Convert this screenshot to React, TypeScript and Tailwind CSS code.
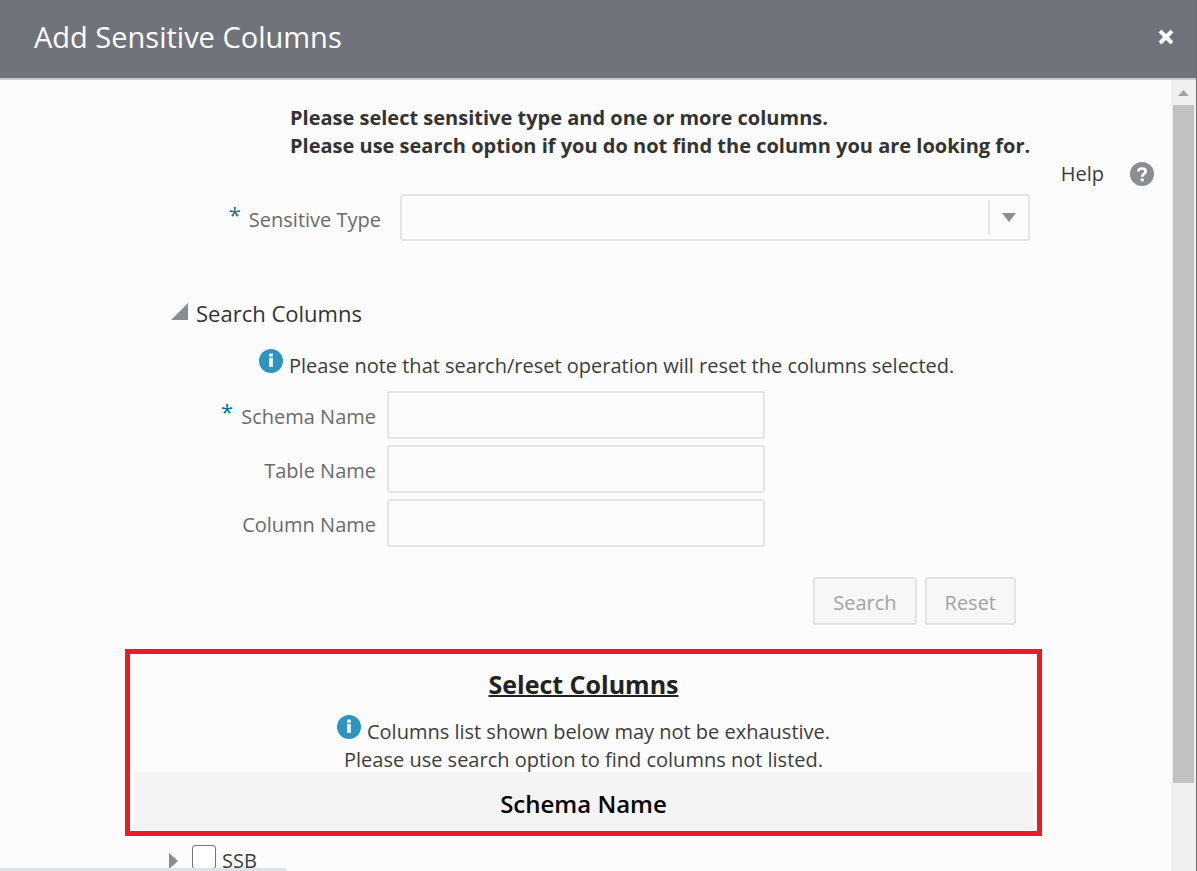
import React from "react";

function InfoIcon() {
  return (
    <svg className="h-6 w-6 shrink-0" viewBox="0 0 24 24" aria-hidden="true">
      <circle cx="12" cy="12" r="12" fill="#2c94bf" />
      <rect x="10.2" y="4.6" width="3.6" height="3" fill="#fff" />
      <rect x="10.2" y="8.8" width="3.6" height="9.2" fill="#fff" />
    </svg>
  );
}

function Required() {
  return <span className="mr-2 self-start pt-1.5 text-[22px] text-[#0572a8]">*</span>;
}

function SearchField({ id, label, required }: { id: string; label: string; required?: boolean }) {
  return (
    <div className="flex items-center gap-[11px]">
      <label htmlFor={id} className="flex h-12 w-[251px] shrink-0 justify-end text-[#6b6b6b]">
        {required && <Required />}
        <span className="self-center pt-1">{label}</span>
      </label>
      <input
        id={id}
        type="text"
        className="h-12 w-[378px] rounded-[3px] border-2 border-[#e4e5e6] bg-[#fcfcfc] px-3 outline-none"
      />
    </div>
  );
}

const buttonClass =
  "h-12 rounded-[3px] border-2 border-[#e4e4e4] bg-[#f7f7f7] px-[18px] pt-1 text-[#a3a3a3]";

export default function App() {
  return (
    <div className="flex h-screen flex-col overflow-hidden border-r border-[#6b6b6b] bg-[#fcfcfc] font-['Open_Sans','Noto_Sans',sans-serif] text-[20px] leading-7 text-[#3c3c3c]">
      <header className="flex h-20 shrink-0 items-center justify-between border-b-2 border-[#c8cace] bg-[#70737c] pr-[22px] pb-1 pl-[34px]">
        <h1 className="text-[29px] leading-10 text-white">Add Sensitive Columns</h1>
        <button type="button" aria-label="Close" className="p-0">
          <svg className="h-4 w-4" viewBox="0 0 16 16" aria-hidden="true">
            <path d="M2 2 14 14M14 2 2 14" stroke="#fff" strokeWidth="4" />
          </svg>
        </button>
      </header>

      <div className="flex min-h-0 flex-1">
        <main className="min-w-0 flex-1 overflow-hidden">
          <p className="pt-6 pl-[290px] font-bold whitespace-nowrap text-[#333]">
            Please select sensitive type and one or more columns.
            <br />
            Please use search option if you do not find the column you are looking for.
          </p>
          <div className="flex items-center justify-end gap-[26px] pr-[17px]">
            <a href="#help">Help</a>
            <a href="#help" aria-label="Help topics">
              <svg className="h-6 w-6" viewBox="0 0 24 24" aria-hidden="true">
                <circle cx="12" cy="12" r="12" fill="#8b8e91" />
                <path
                  d="M8.4 9.6C8.4 7.5 9.9 6.5 12 6.5s3.7 1.1 3.7 3c0 2.5-3.5 2.3-3.5 5.2"
                  fill="none"
                  stroke="#fff"
                  strokeWidth="2.7"
                />
                <circle cx="12.2" cy="17.9" r="1.7" fill="#fff" />
              </svg>
            </a>
          </div>

          <div className="pr-[129px] pl-[125px]">
            <div className="mt-1.5 flex items-center gap-[19px] pr-3">
              <label
                htmlFor="sensitive-type"
                className="flex h-[47px] w-64 shrink-0 justify-end text-[#6b6b6b]"
              >
                <Required />
                <span className="self-center pt-1">Sensitive Type</span>
              </label>
              <div className="relative flex-1">
                <select
                  id="sensitive-type"
                  className="block h-[47px] w-full appearance-none rounded-[3px] border-2 border-[#e4e5e6] bg-[#fcfcfc] px-3 outline-none"
                >
                  <option value=""></option>
                </select>
                <span className="pointer-events-none absolute inset-y-1.5 right-0 flex w-[42px] items-center justify-center border-l-2 border-[#e4e5e6] pr-0.5">
                  <svg className="h-[9px] w-3.5" viewBox="0 0 14 9" aria-hidden="true">
                    <path d="M0 0H14L7 9Z" fill="#8b8e91" />
                  </svg>
                </span>
              </div>
            </div>

            <h2 className="mt-[58px] pl-[46px] text-[22px] text-[#333]">
              <button type="button" aria-expanded="true" className="flex items-center gap-2">
                <svg className="mb-1 h-[17px] w-[17px]" viewBox="0 0 17 17" aria-hidden="true">
                  <path d="M17 0V17H0Z" fill="#8b8e91" />
                </svg>
                Search Columns
              </button>
            </h2>

            <p className="mt-[22px] flex items-start gap-1.5 pl-[134px]">
              <InfoIcon />
              <span className="pt-[3px] whitespace-nowrap">
                Please note that search/reset operation will reset the columns selected.
              </span>
            </p>

            <div className="mt-[11px] flex flex-col gap-1.5">
              <SearchField id="schema-name" label="Schema Name" required />
              <SearchField id="table-name" label="Table Name" />
              <SearchField id="column-name" label="Column Name" />
            </div>

            <div className="mt-[30px] flex justify-end gap-2 pr-[26px]">
              <button type="button" disabled className={buttonClass}>
                Search
              </button>
              <button type="button" disabled className={buttonClass}>
                Reset
              </button>
            </div>

            <section className="relative mt-6 pt-[19px]">
              <div className="pointer-events-none absolute inset-x-0 top-0 h-[187px] border-5 border-[#ed1c24]" />
              <h2 className="text-center text-[25px] leading-8 font-bold text-[#222] underline decoration-2">
                Select Columns
              </h2>
              <p className="mt-[15px] flex items-start justify-center gap-1.5">
                <InfoIcon />
                <span className="pt-[3px]">Columns list shown below may not be exhaustive.</span>
              </p>
              <p className="mt-0.5 text-center leading-6">
                Please use search option to find columns not listed.
              </p>
              <div className="px-[9px]">
                <table className="w-full border-collapse">
                  <thead>
                    <tr className="h-[60px] border-b border-[#dcdfe2] bg-[#f4f4f4]">
                      <th scope="col" className="pt-1 text-center text-[24px] font-semibold text-black">
                        Schema Name
                      </th>
                    </tr>
                  </thead>
                  <tbody>
                    <tr>
                      <td className="pt-3 pl-[35px]">
                        <div className="flex items-start">
                          <button type="button" aria-label="Expand SSB" className="mr-3.5 pt-2">
                            <svg className="block h-4 w-[9px]" viewBox="0 0 9 16" aria-hidden="true">
                              <path d="M0 0 9 8 0 16Z" fill="#8b8e91" />
                            </svg>
                          </button>
                          <input
                            id="ssb"
                            type="checkbox"
                            className="mr-1.5 h-6 w-6 appearance-none rounded-[3px] border border-[#767676] bg-white checked:bg-[#2c94bf]"
                          />
                          <label htmlFor="ssb" className="pt-0.5">
                            SSB
                          </label>
                        </div>
                      </td>
                    </tr>
                  </tbody>
                </table>
              </div>
            </section>
          </div>
        </main>

        <div className="flex w-[25px] shrink-0 flex-col bg-[#f0f0f0] px-0.5" aria-hidden="true">
          <div className="flex h-[25px] shrink-0 items-center justify-center">
            <svg className="h-1.5 w-[11px]" viewBox="0 0 11 6">
              <path d="M0 6 5.5 0 11 6Z" fill="#a0a0a0" />
            </svg>
          </div>
          <div className="h-6/7 bg-[#c1c1c1]" />
        </div>
      </div>

      <div className="absolute bottom-0 left-0 h-[3px] w-[287px] rounded-tr bg-[#dee1e6]" />
    </div>
  );
}
